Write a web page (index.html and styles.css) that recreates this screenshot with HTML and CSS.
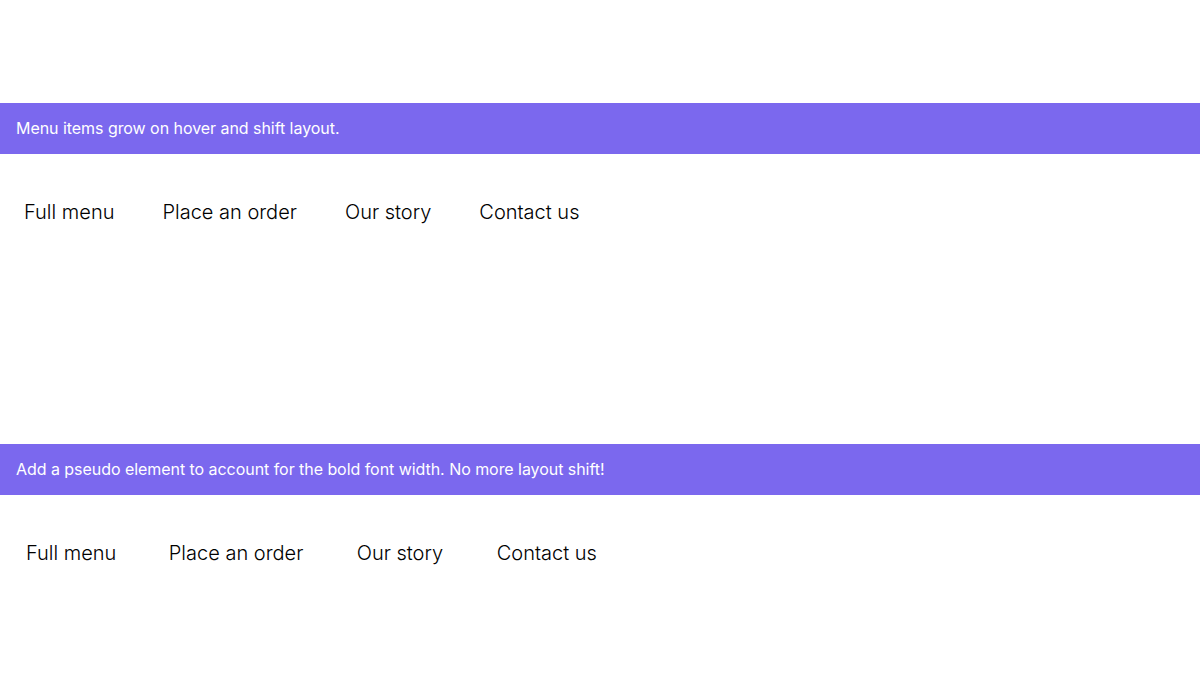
FILE: index.html
```html
<!DOCTYPE html>
<html lang="en">
<head>
<meta charset="utf-8">
<title>Menu hover layout shift</title>
<link rel="stylesheet" href="styles.css">
</head>
<body>

<section class="demo">
  <p class="note">Menu items grow on hover and shift layout.</p>
  <nav>
    <ul class="menu">
      <li><a href="#">Full menu</a></li>
      <li><a href="#">Place an order</a></li>
      <li><a href="#">Our story</a></li>
      <li><a href="#">Contact us</a></li>
    </ul>
  </nav>
</section>

<section class="demo">
  <p class="note">Add a pseudo element to account for the bold font width. No more layout shift!</p>
  <nav>
    <ul class="menu menu-fixed">
      <li><a href="#" data-text="Full menu">Full menu</a></li>
      <li><a href="#" data-text="Place an order">Place an order</a></li>
      <li><a href="#" data-text="Our story">Our story</a></li>
      <li><a href="#" data-text="Contact us">Contact us</a></li>
    </ul>
  </nav>
</section>

</body>
</html>
```

FILE: styles.css
```css
/* Bold-on-hover menu, with and without the width placeholder */

body
{ margin: 0;
  font-family: "Inter", "Liberation Sans", sans-serif;
  color: #111;
  background: #fff;
}

section.demo
{ height: 341px;
  padding-top: 103px;
  box-sizing: border-box;
}

p.note
{ margin: 0;
  padding: 16px;
  background-color: #7b68ee;
  color: #fff;
  font-size: 16px;
  line-height: 19px;
  letter-spacing: -0.05px;
}

ul.menu
{ display: flex;
  margin: 30px 0 0;
  padding: 0;
  list-style: none;
}

ul.menu li
{ padding: 16px 24px;
}

ul.menu a
{ color: #000;
  text-decoration: none;
  font-size: 20px;
  font-weight: 300;
  line-height: 24px;
}

ul.menu a:hover
{ font-weight: 700;
}

/* Reserve the bold width with a hidden copy of the label */

ul.menu-fixed a
{ display: inline-flex;
  flex-direction: column;
  align-items: center;
}

ul.menu-fixed a::after
{ content: attr(data-text);
  height: 0;
  visibility: hidden;
  overflow: hidden;
  user-select: none;
  pointer-events: none;
  font-weight: 700;
}
```
